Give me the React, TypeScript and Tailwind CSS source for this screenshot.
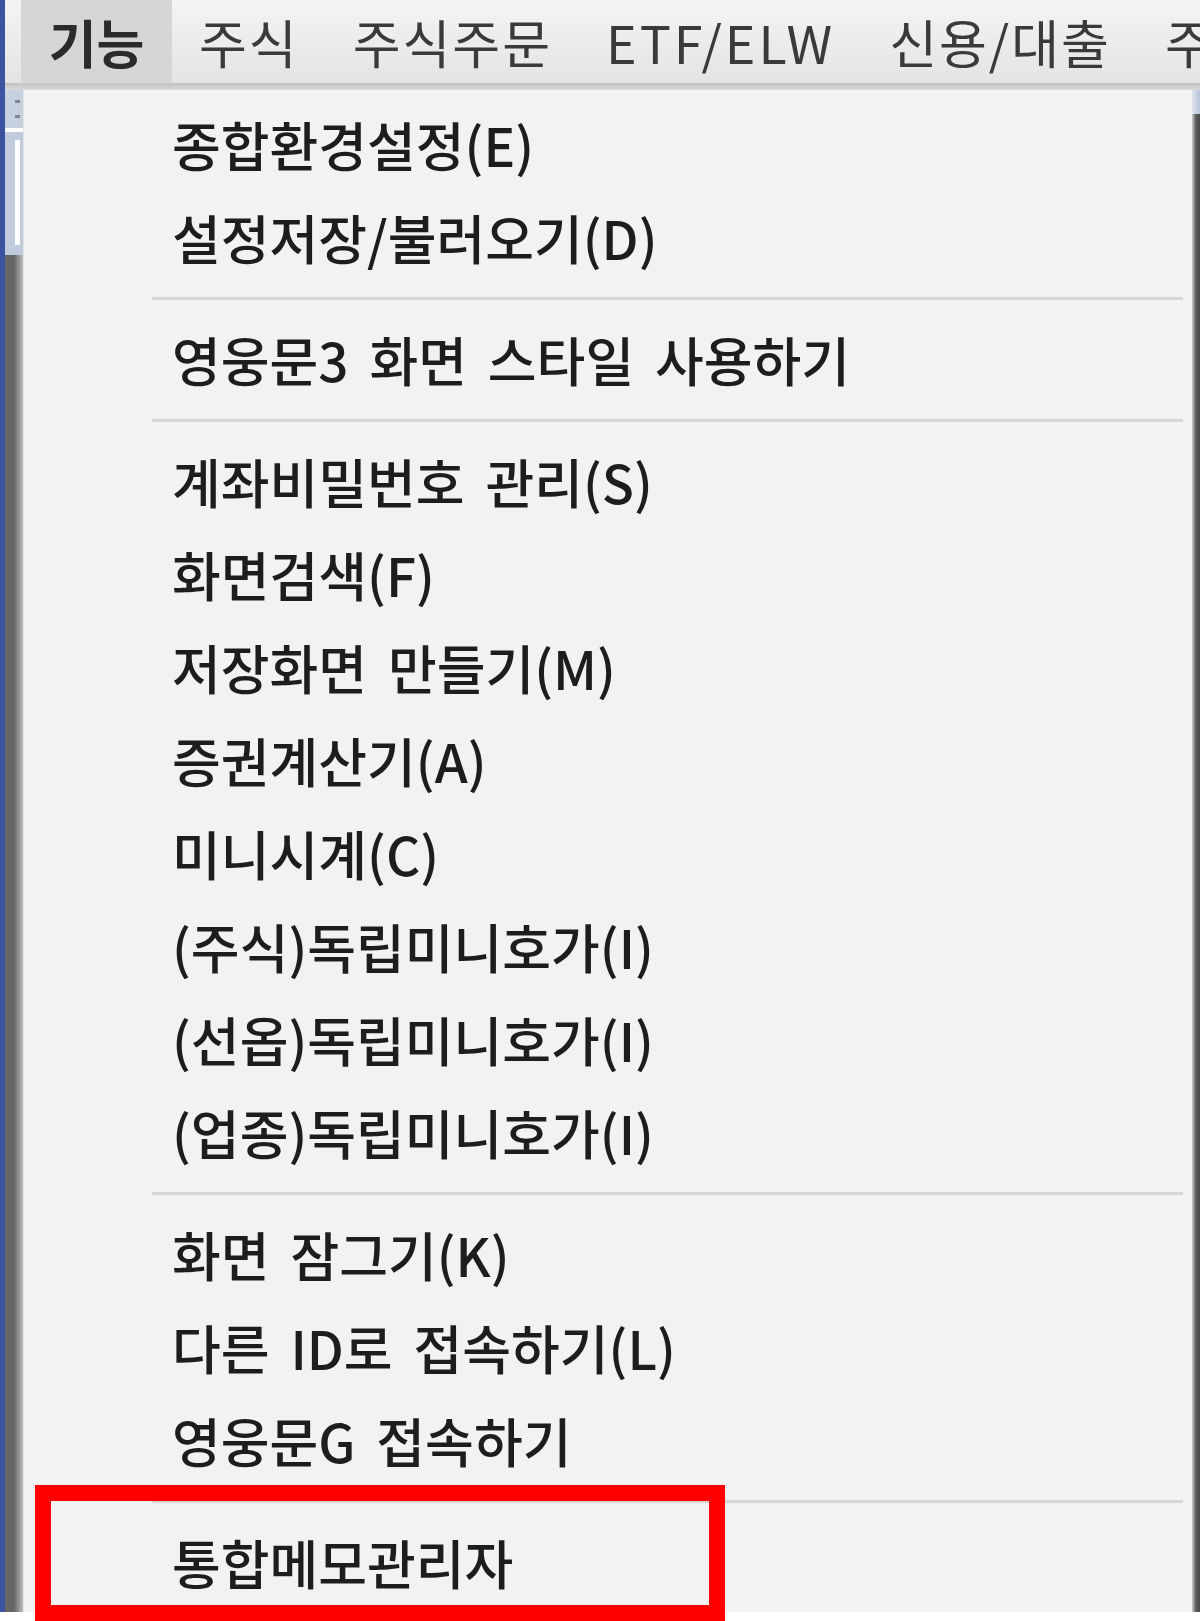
const font = { fontFamily: '"Malgun Gothic", "Noto Sans CJK KR", "Noto Sans", sans-serif' }

type Entry = { label: string } | { sep: true }

const entries: Entry[] = [
  { label: "종합환경설정(E)" },
  { label: "설정저장/불러오기(D)" },
  { sep: true },
  { label: "영웅문3 화면 스타일 사용하기" },
  { sep: true },
  { label: "계좌비밀번호 관리(S)" },
  { label: "화면검색(F)" },
  { label: "저장화면 만들기(M)" },
  { label: "증권계산기(A)" },
  { label: "미니시계(C)" },
  { label: "(주식)독립미니호가(I)" },
  { label: "(선옵)독립미니호가(I)" },
  { label: "(업종)독립미니호가(I)" },
  { sep: true },
  { label: "화면 잠그기(K)" },
  { label: "다른 ID로 접속하기(L)" },
  { label: "영웅문G 접속하기" },
  { sep: true },
  { label: "통합메모관리자" },
]

const topMenus = ["주식", "주식주문", "ETF/ELW", "신용/대출", "주"]

function MenuBar() {
  return (
    <div className="h-[90px] flex flex-col">
      <div className="h-[83px] flex items-stretch pl-[16px] bg-gradient-to-b from-[#f4f4f4] to-[#e4e4e4]">
        <div className="w-[151px] shrink-0 flex items-center justify-center bg-[#d6d6d6]">
          <span className="text-[52px] leading-none font-bold text-[#2b2b2b]" style={font}>
            기능
          </span>
        </div>
        {topMenus.map((m) => (
          <div key={m} className="shrink-0 flex items-center px-[27px]">
            <span
              className={
                m === "ETF/ELW"
                  ? "text-[52px] leading-none tracking-[3px] text-[#3a3a3a] whitespace-nowrap"
                  : "text-[52px] leading-none tracking-[2px] text-[#3a3a3a] whitespace-nowrap"
              }
              style={font}
            >
              {m}
            </span>
          </div>
        ))}
      </div>
      <div className="h-[7px] bg-gradient-to-b from-[#c2c2c2] to-[#dadada]" />
    </div>
  )
}

function LeftStrip() {
  return (
    <div className="w-[18px] shrink-0 flex flex-col">
      <div className="h-[38px] bg-[#c6d0df] flex flex-col items-end justify-center gap-[12px] pr-[3px]">
        <div className="w-[5px] h-[3px] bg-[#7c8796]" />
        <div className="w-[5px] h-[3px] bg-[#7c8796]" />
      </div>
      <div className="h-[4px] bg-white" />
      <div className="h-[123px] bg-[#c0cbde] flex justify-end pr-[3px] pt-[8px] pb-[10px]">
        <div className="w-[5px] h-full bg-white" />
      </div>
      <div className="flex-1 bg-gradient-to-r from-[#666666] via-[#666666] to-[#bdbdbd]" />
    </div>
  )
}

function RightStrip() {
  return (
    <div className="w-[8px] shrink-0 flex flex-col">
      <div className="h-[24px] bg-gradient-to-r from-[#dfe4ee] to-[#b7c3d8]" />
      <div className="flex-1 bg-gradient-to-r from-[#cfcfcf] via-[#5a5a5a] to-[#4a4a4a]" />
    </div>
  )
}

function Dropdown() {
  return (
    <div className="flex-1 bg-[#f2f2f2] border-l border-[#e4e4e4] pt-[8px]">
      {entries.map((e, i) =>
        "sep" in e ? (
          <div key={i} className="h-[29px] flex items-center pl-[128px] pr-[9px]">
            <div className="h-[3px] w-full bg-[#d6d6d6]" />
          </div>
        ) : (
          <div key={i} className="h-[93px] flex items-center pl-[148px]">
            <span
              className="text-[53px] leading-none font-medium [word-spacing:9px] text-[#1d1d1d] whitespace-nowrap"
              style={font}
            >
              {e.label}
            </span>
          </div>
        )
      )}
    </div>
  )
}

export default function App() {
  return (
    <div className="relative w-[1200px] h-[1621px] bg-white overflow-hidden">
      <div className="h-[1612px] flex overflow-hidden">
        <div className="w-[5px] shrink-0 bg-[#3b54a2]" />
        <div className="flex-1 flex flex-col min-w-0">
          <MenuBar />
          <div className="flex-1 flex min-h-0">
            <LeftStrip />
            <Dropdown />
            <RightStrip />
          </div>
        </div>
      </div>
      {/* highlight around the last item */}
      <div className="absolute left-[35px] top-[1485px] w-[690px] h-[136px] border-[16px] border-[#ff0000]" />
    </div>
  )
}
